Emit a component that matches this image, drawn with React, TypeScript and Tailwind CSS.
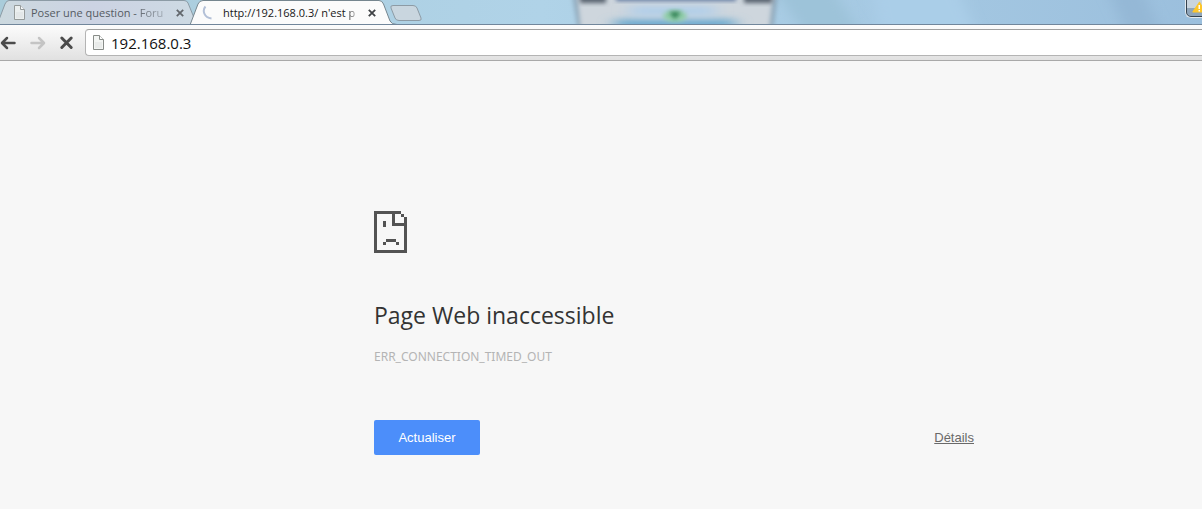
import React from 'react';

const UI_FONT = "font-['Open_Sans','Noto_Sans',sans-serif]";

export default function App() {
  return (
    <div className={`min-h-screen overflow-hidden bg-[#f7f7f7] ${UI_FONT}`}>
      <TabStrip />
      <Toolbar />
      <ErrorPage />
    </div>
  );
}

function TabStrip() {
  return (
    <div className="relative flex h-[25px] overflow-hidden border-b border-[#71869b] bg-[#afd1e7]">
      <GlassBackdrop />

      {/* Background tab */}
      <div className="relative flex h-6 w-[194px] shrink-0 items-center pl-[13px] pr-2">
        <svg className="absolute inset-0 h-full w-full" viewBox="0 0 194 24" preserveAspectRatio="none" aria-hidden="true">
          <defs>
            <linearGradient id="idleTab" x1="0" y1="0" x2="1" y2="0">
              <stop offset="0" stopColor="#ccd9df" />
              <stop offset="0.48" stopColor="#ccd3e3" />
              <stop offset="1" stopColor="#cddae3" />
            </linearGradient>
          </defs>
          <path d="M-3 25L5 4Q6.500 .5 9 .5H184Q187 .5 188 3L197 25Z" fill="url(#idleTab)" stroke="#8c9ba5" />
        </svg>
        <PageIcon className="relative h-[15px] w-[13px] shrink-0 opacity-80" />
        <span className="relative ml-[5px] min-w-0 flex-1 whitespace-nowrap pt-0.5 text-[11px] leading-4 text-[#555b62]">
          Poser une question - <TabTextEnd text="Foru" />
        </span>
        <CloseButton label="Fermer l'onglet Poser une question" className="text-[#62676c]" />
      </div>

      {/* Active tab */}
      <div className="relative -ml-1 flex h-[25px] w-[207px] shrink-0 items-center pb-px pl-3 pr-[19px]">
        <svg className="absolute inset-0 h-full w-full" viewBox="0 0 207 25" preserveAspectRatio="none" aria-hidden="true">
          <path d="M0 25L8 4Q9.500 .5 13 .5H189Q192 .5 193.500 4L200 21Q201.500 24.500 207 24.500V25Z" fill="#fbfbfb" />
          <path d="M0 25L8 4Q9.500 .5 13 .5H189Q192 .5 193.500 4L200 21Q201.500 24.500 207 24.500" fill="none" stroke="#76868f" />
        </svg>
        <svg className="relative h-4 w-4 shrink-0" viewBox="0 0 16 16" fill="none" aria-hidden="true">
          <path d="M3.500 2.500C0 6.500 2 13.500 9.500 14.500" stroke="#b3c0d7" strokeWidth="2" />
        </svg>
        <span className="relative ml-[5px] min-w-0 flex-1 whitespace-nowrap pt-0.5 text-[11px] leading-4 text-[#171717]">
          http://192.168.0.3/ n'est <TabTextEnd text="p" />
        </span>
        <CloseButton label="Fermer l'onglet 192.168.0.3" className="text-[#3f4245]" />
      </div>

      <button type="button" aria-label="Nouvel onglet" className="relative z-10 -ml-[7px] h-6 w-8 shrink-0">
        <svg className="h-6 w-8" viewBox="0 0 32 24" aria-hidden="true">
          <path d="M3 5.500H23Q26 5.500 27 8L31 18Q32 20.500 29 20.500H9Q6 20.500 5 18L1 8Q0 5.500 3 5.500Z" fill="#c9d6df" stroke="#8d9ba5" />
        </svg>
      </button>

      {/* Caption button cut by the window edge */}
      <div className="absolute right-0 top-0 h-[18px] w-[17px] overflow-hidden rounded-bl-md border-b border-l border-[#e2eaf0] bg-[#35424e] pb-px pl-px">
        <div className="h-full w-full rounded-bl bg-linear-to-b from-[#c9d5df] from-50% to-[#8fa5ba] to-50%">
          <svg className="h-4 w-full" viewBox="0 0 15 16" preserveAspectRatio="xMinYMin slice" aria-hidden="true">
            <path d="M12 2Q12.500 1 13 2L19 12.500H6Q5 12.500 5.500 11.500Z" fill="#fdc62a" />
            <path d="M11.500 5H13V9H11.500ZM11.500 10H13V11.500H11.500Z" fill="#fff" />
          </svg>
        </div>
      </div>
    </div>
  );
}

// Last letters of a tab title fade out towards the close button
function TabTextEnd({ text }: { text: string }) {
  return <span className="[mask-image:linear-gradient(to_right,rgba(0,0,0,0.85),rgba(0,0,0,0.35))]">{text}</span>;
}

function GlassBackdrop() {
  return (
    <div className="absolute inset-0 bg-linear-to-r from-[#a9ccda] via-[#b0d3e8] via-45% to-[#9bbfdd]">
      <svg className="absolute right-0 top-0 h-6 w-[412px] overflow-visible" viewBox="0 0 412 24" preserveAspectRatio="none" aria-hidden="true">
        <defs>
          <filter id="streak" x="-20%" y="-50%" width="140%" height="200%">
            <feGaussianBlur stdDeviation="7 2" />
          </filter>
        </defs>
        <path d="M-20 -15H40L75 40H20Z" fill="#9dc3d9" filter="url(#streak)" />
        <path d="M80 -15H165L190 40H90Z" fill="#aacee8" filter="url(#streak)" />
        <path d="M315 -15H350L375 40H340Z" fill="#94b8d6" filter="url(#streak)" />
      </svg>
      <svg className="absolute left-[560px] top-0 h-6 w-[230px]" viewBox="0 0 230 24" aria-hidden="true">
        <defs>
          <filter id="soft" x="-20%" y="-50%" width="140%" height="200%">
            <feGaussianBlur stdDeviation="2" />
          </filter>
          <filter id="softer" x="-50%" y="-100%" width="200%" height="300%">
            <feGaussianBlur stdDeviation="8 3" />
          </filter>
        </defs>
        <path d="M12 -6H218L213 30H18Z" fill="#8fa9bc" filter="url(#soft)" />
        <path d="M17 -6H213L209 30H21Z" fill="#ced6dd" filter="url(#soft)" />
        <rect x="55" y="19" width="120" height="10" fill="#6facd0" filter="url(#softer)" />
        <rect x="70" y="6" width="85" height="10" fill="#b2cfe9" filter="url(#softer)" />
        <rect x="20" y="-5" width="26" height="8" fill="#586470" filter="url(#soft)" />
        <rect x="56" y="-5" width="120" height="6" fill="#5f779f" filter="url(#soft)" />
        <rect x="184" y="-5" width="28" height="8" fill="#586470" filter="url(#soft)" />
        <ellipse cx="115" cy="16" rx="12" ry="6" fill="#91cda9" filter="url(#soft)" />
        <path d="M109 12H121L115 19Z" fill="#28794c" filter="url(#soft)" />
      </svg>
    </div>
  );
}

function CloseButton({ label, className }: { label: string; className: string }) {
  return (
    <button type="button" aria-label={label} className={`relative flex h-4 w-3 shrink-0 items-center justify-center ${className}`}>
      <svg className="mt-0.5 h-2 w-2" viewBox="0 0 8 8" stroke="currentColor" strokeWidth="1.800" aria-hidden="true">
        <path d="M.8 .8L7.200 7.200M7.200 .8L.8 7.200" />
      </svg>
    </button>
  );
}

function PageIcon({ className }: { className: string }) {
  return (
    <svg className={className} viewBox="0 0 13 15" aria-hidden="true">
      <path d="M1.500 .5H7.500L11.500 4.500V14.500H1.500Z" fill="#f3f5f3" stroke="#888c89" />
      <path d="M7.500 .5V4.500H11.500" fill="#fff" stroke="#888c89" />
      <path d="M3 7H10V13H3Z" fill="#e9ebea" />
    </svg>
  );
}

function Toolbar() {
  return (
    <div className="flex h-9 items-center border-b border-[#a9a9a9] bg-linear-to-b from-[#fcfcfc] to-[#e1e1e1]">
      <button type="button" aria-label="Précédent" className="flex h-7 w-6 shrink-0 items-center text-[#4b4b4b]">
        <ArrowIcon className="h-4 w-4" />
      </button>
      <button type="button" aria-label="Suivant" disabled className="flex h-7 w-8 shrink-0 items-center justify-center text-[#c4c4c4]">
        <ArrowIcon className="-ml-1 h-4 w-4 -scale-x-100" />
      </button>
      <button type="button" aria-label="Arrêter" className="flex h-7 w-[29px] shrink-0 items-center pl-[3px] text-[#4b4b4b]">
        <svg className="h-4 w-4" viewBox="0 0 16 16" stroke="currentColor" strokeWidth="3" strokeLinecap="round" aria-hidden="true">
          <path d="M2.800 3L12.200 12.500M12.200 3L2.800 12.500" />
        </svg>
      </button>
      <div className="flex h-[27px] min-w-0 flex-1 items-center rounded-l-sm border border-r-0 border-[#b4b4b4] border-t-[#a0a0a0] bg-white pl-1.5">
        <PageIcon className="h-[15px] w-[13px] shrink-0" />
        <input
          type="text"
          aria-label="Adresse"
          defaultValue="192.168.0.3"
          className="ml-1.5 min-w-0 flex-1 bg-transparent text-[15px] leading-5 text-[#111] outline-none"
        />
      </div>
    </div>
  );
}

function ArrowIcon({ className }: { className: string }) {
  return (
    <svg className={className} viewBox="0 0 16 16" fill="none" stroke="currentColor" strokeWidth="2.500" strokeLinecap="round" strokeLinejoin="round" aria-hidden="true">
      <path d="M7 3L2 8L7 13M2.500 8H14.500" />
    </svg>
  );
}

function ErrorPage() {
  return (
    <main className="max-w-[974px] pl-[374px] pt-[150px]">
      <svg className="h-[42px] w-[33px]" viewBox="0 0 33 42" fill="#535353" shapeRendering="crispEdges" aria-hidden="true">
        <path d="M0 0H27V3H3V39H30V15H18V3H21V12H30V6H33V42H0Z" />
        <path d="M27 3H30V6H27ZM9 10H12V16H9ZM12 28H22V31H12ZM9 31H12V34H9ZM22 31H25V34H22Z" />
      </svg>
      <h1 className="mt-[46px] text-[23px] leading-8 text-[#333]">Page Web inaccessible</h1>
      <p className="mt-4 font-['Noto_Sans','Open_Sans',sans-serif] text-[12px] leading-5 text-[#b4b4b4]">ERR_CONNECTION_TIMED_OUT</p>
      <div className="mt-[53px] flex items-center justify-between font-['Liberation_Sans',Arial,sans-serif] text-[13px]">
        <button type="button" className="h-[35px] min-w-[106px] rounded-xs bg-[#4c8efa] px-6 text-white">
          Actualiser
        </button>
        <a href="#details" className="text-[#696969] underline">
          Détails
        </a>
      </div>
    </main>
  );
}
